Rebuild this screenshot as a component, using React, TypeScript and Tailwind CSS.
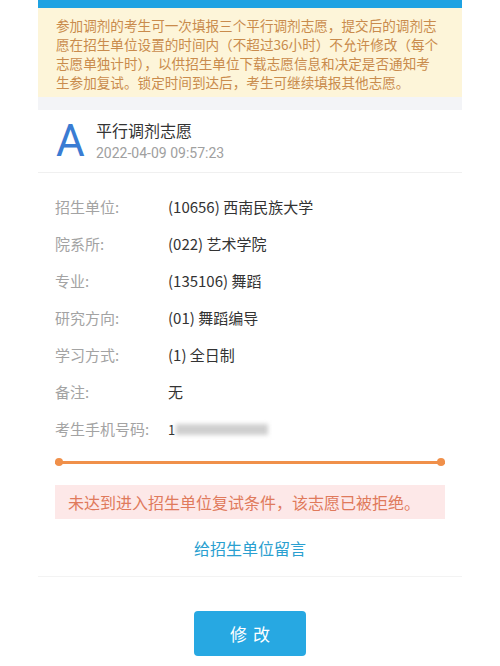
import React from 'react';

const font = { fontFamily: '"Noto Sans CJK SC", Roboto, "Noto Sans", sans-serif' };

const rows: [string, string][] = [
  ['招生单位:', '(10656) 西南民族大学'],
  ['院系所:', '(022) 艺术学院'],
  ['专业:', '(135106) 舞蹈'],
  ['研究方向:', '(01) 舞蹈编导'],
  ['学习方式:', '(1) 全日制'],
  ['备注:', '无'],
];

// notice text, split the way the app wraps it
const notice = [
  '参加调剂的考生可一次填报三个平行调剂志愿，提交后的调剂志',
  '愿在招生单位设置的时间内（不超过36小时）不允许修改（每个',
  '志愿单独计时），以供招生单位下载志愿信息和决定是否通知考',
  '生参加复试。锁定时间到达后，考生可继续填报其他志愿。',
];

function Row({ label, children }: { label: string; children: React.ReactNode }) {
  return (
    <div className="flex items-center h-[37px]">
      <span className="w-[113px] text-[15px] text-[#a3a3a3]">{label}</span>
      <span className="text-[15px] text-[#333]">{children}</span>
    </div>
  );
}

export default function App() {
  return (
    <div className="w-[500px] h-[666px] bg-white overflow-hidden" style={font}>
      <div className="mx-[38px]">
        <div className="h-[8px] bg-[#1ea2e2]" />
        <div className="bg-[#fdf5d9] px-[18px] pt-[8px] pb-[5px] text-[13.6px] leading-[19px] text-[#c98b4c] whitespace-nowrap">
          {notice.map((line) => (
            <div key={line}>{line}</div>
          ))}
        </div>
        <div className="h-[13px] bg-[#f3f4f7]" />

        <div className="bg-white">
          {/* header */}
          <div className="flex items-center h-[63px] px-[18px] border-b border-[#f0f0f0]">
            <span className="text-[44px] leading-none text-[#3a7cd3] w-[40px]" style={{ fontFamily: 'Roboto, sans-serif' }}>
              A
            </span>
            <div className="flex flex-col">
              <span className="text-[16px] leading-[23px] text-[#333]">平行调剂志愿</span>
              <span className="text-[14px] leading-[22px] text-[#a0a0a0]" style={{ fontFamily: 'Roboto, sans-serif' }}>
                2022-04-09 09:57:23
              </span>
            </div>
          </div>

          {/* details */}
          <div className="px-[17px] pt-[16px]">
            {rows.map(([l, v]) => (
              <Row key={l} label={l}>{v}</Row>
            ))}
            <Row label="考生手机号码:">
              <span className="flex items-center">
                <span className="text-[13px] text-[#333]">1</span>
                <span className="ml-[1px] w-[92px] h-[11px] bg-[#cfcfcf] blur-[2px]" />
              </span>
            </Row>

            <div className="relative mt-[10px] h-[8px] flex items-center">
              <div className="w-full h-[3px] bg-[#f0904a]" />
              <span className="absolute left-0 top-0 w-[8px] h-[8px] rounded-full bg-[#f0904a]" />
              <span className="absolute right-0 top-0 w-[8px] h-[8px] rounded-full bg-[#f0904a]" />
            </div>

            <div className="mt-[19px] h-[34px] bg-[#fde8e8] flex items-center px-[13px] text-[16px] text-[#e07a5c]">
              未达到进入招生单位复试条件，该志愿已被拒绝。
            </div>

            <div className="h-[57px] flex items-center justify-center text-[16px] text-[#2a9fd0]">
              给招生单位留言
            </div>
          </div>
          <div className="border-b border-[#f3f3f3]" />
        </div>

        <div className="flex justify-center pt-[34px]">
          <button className="w-[112px] h-[45px] rounded-[4px] bg-[#27a8e2] text-white text-[17px] tracking-[6px] pl-[6px]">
            修改
          </button>
        </div>
      </div>
    </div>
  );
}
